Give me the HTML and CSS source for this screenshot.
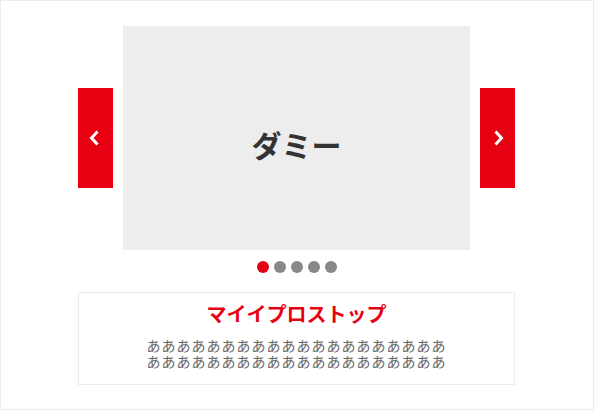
FILE: index.html
```html
<!DOCTYPE html>
<html lang="ja">
<head>
<meta charset="utf-8">
<link rel="stylesheet" href="styles.css">
</head>
<body>
<div class="page">
  <div class="carousel">
    <button class="nav nav-prev" aria-label="前へ">
      <svg width="12" height="16" viewBox="0 0 12 16"><polyline points="9.5,1.5 3.5,8 9.5,14.5" fill="none" stroke="#fff" stroke-width="3"/></svg>
    </button>
    <div class="slide"><span class="slide-title">ダミー</span></div>
    <button class="nav nav-next" aria-label="次へ">
      <svg width="12" height="16" viewBox="0 0 12 16"><polyline points="2.5,1.5 8.5,8 2.5,14.5" fill="none" stroke="#fff" stroke-width="3"/></svg>
    </button>
  </div>
  <div class="dots">
    <span class="dot active"></span>
    <span class="dot"></span>
    <span class="dot"></span>
    <span class="dot"></span>
    <span class="dot"></span>
  </div>
  <div class="caption">
    <h2 class="caption-title">マイイプロストップ</h2>
    <p class="caption-text">ああああああああああああああああああああああああああああああああああああああああ</p>
  </div>
</div>
</body>
</html>
```
FILE: styles.css
```css
html, body {
  margin: 0;
  padding: 0;
  background: #fff;
}
.page {
  width: 594px;
  height: 410px;
  box-sizing: border-box;
  border: 1px solid #ececec;
  padding: 25px 1px 0 0;
  font-family: "Noto Sans CJK JP", "Noto Sans", sans-serif;
}
.carousel {
  display: flex;
  justify-content: center;
  align-items: center;
  gap: 10px;
}
.nav {
  width: 35px;
  height: 100px;
  background: #e60012;
  border: none;
  padding: 0;
  margin: 0;
  display: flex;
  align-items: center;
  justify-content: center;
}
.nav svg {
  display: block;
}
.nav-prev svg { margin-left: -3px; }
.nav-next svg { margin-left: 3px; }
.slide {
  width: 347px;
  height: 224px;
  background: #ededed;
  display: flex;
  align-items: center;
  justify-content: center;
}
.slide-title {
  font-size: 30px;
  font-weight: 700;
  color: #333;
  padding-top: 11px;
}
.dots {
  display: flex;
  justify-content: center;
  gap: 5px;
  margin-top: 11px;
}
.dot {
  width: 12px;
  height: 12px;
  border-radius: 50%;
  background: #888;
}
.dot.active {
  background: #e60012;
}
.caption {
  width: 437px;
  height: 93px;
  box-sizing: border-box;
  margin: 19px auto 0;
  border: 1px solid #ececec;
  text-align: center;
  padding-top: 7px;
}
.caption-title {
  margin: 0;
  font-size: 20px;
  line-height: 28px;
  font-weight: 700;
  color: #e60012;
}
.caption-text {
  width: 300px;
  margin: 9px auto 0;
  font-size: 14px;
  letter-spacing: 1px;
  line-height: 16px;
  color: #666;
}
```
